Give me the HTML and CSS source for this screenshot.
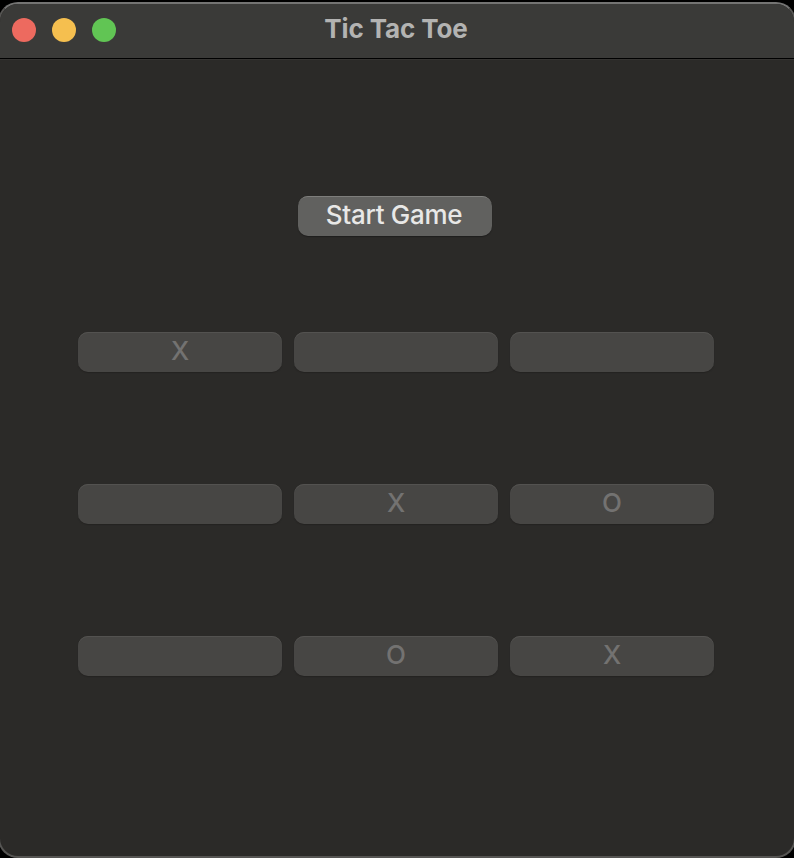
FILE: index.html
```html
<!DOCTYPE html>
<html lang="en">
<head>
<meta charset="utf-8">
<title>Tic Tac Toe</title>
<link rel="stylesheet" href="styles.css">
</head>
<body>
<div class="window">
  <header class="titlebar">
    <div class="lights">
      <span class="light close"></span>
      <span class="light minimize"></span>
      <span class="light maximize"></span>
    </div>
    <h1 class="title">Tic Tac Toe</h1>
  </header>
  <main class="content">
    <button class="button start">Start Game</button>
    <div class="board">
      <button class="button cell" disabled>X</button>
      <button class="button cell" disabled></button>
      <button class="button cell" disabled></button>
      <button class="button cell" disabled></button>
      <button class="button cell" disabled>X</button>
      <button class="button cell" disabled>O</button>
      <button class="button cell" disabled></button>
      <button class="button cell" disabled>O</button>
      <button class="button cell" disabled>X</button>
    </div>
  </main>
</div>
</body>
</html>
```
FILE: styles.css
```css
* {
  box-sizing: border-box;
}

body {
  margin: 0;
  height: 858px;
  overflow: hidden;
  background: #000;
  font-family: Inter, "Liberation Sans", sans-serif;
}

.window {
  height: 856px;
  margin: 2px -2px 0;
  border-radius: 20px;
  overflow: hidden;
  background: #2b2a28;
  border: 2px solid #565553;
  border-top-color: #747473;
}

.titlebar {
  display: grid;
  grid-template-columns: 128px 1fr 130px;
  height: 55px;
  background: #3a3a38;
  border-bottom: 1px solid #000;
}

.lights {
  display: flex;
  gap: 16px;
  padding: 14px 0 0 12px;
}

.light {
  width: 24px;
  height: 24px;
  border-radius: 50%;
}

.close {
  background: #ed6a5f;
}

.minimize {
  background: #f5bf4f;
}

.maximize {
  background: #61c554;
}

.title {
  margin: 0;
  padding-top: 9px;
  text-align: center;
  font-size: 26px;
  line-height: 32px;
  font-weight: 700;
  letter-spacing: -0.1px;
  color: #b3b3b2;
}

.content {
  display: flex;
  flex-direction: column;
  align-items: flex-start;
  padding: 136px 78px 0;
  border-top: 1px solid #353432;
}

.button {
  height: 40px;
  padding: 0 0 3px;
  border: 0;
  border-radius: 10px;
  font: 500 26px/36px Inter, "Liberation Sans", sans-serif;
  text-align: center;
}

.start {
  width: 194px;
  margin: 0 0 96px 220px;
  padding-right: 2px;
  background: #61615f;
  color: #e8e8e7;
  letter-spacing: -0.3px;
  box-shadow: inset 0 2px 0 -1px #7e7e7c, 0 1px 1px #1f1e1d;
}

.board {
  display: grid;
  grid-template-columns: repeat(3, 204px);
  grid-auto-rows: 40px;
  gap: 112px 12px;
}

.cell {
  background: #474644;
  color: #737271;
  box-shadow: inset 0 1px 0 #535250, 0 1px 1px #242321;
}
```
